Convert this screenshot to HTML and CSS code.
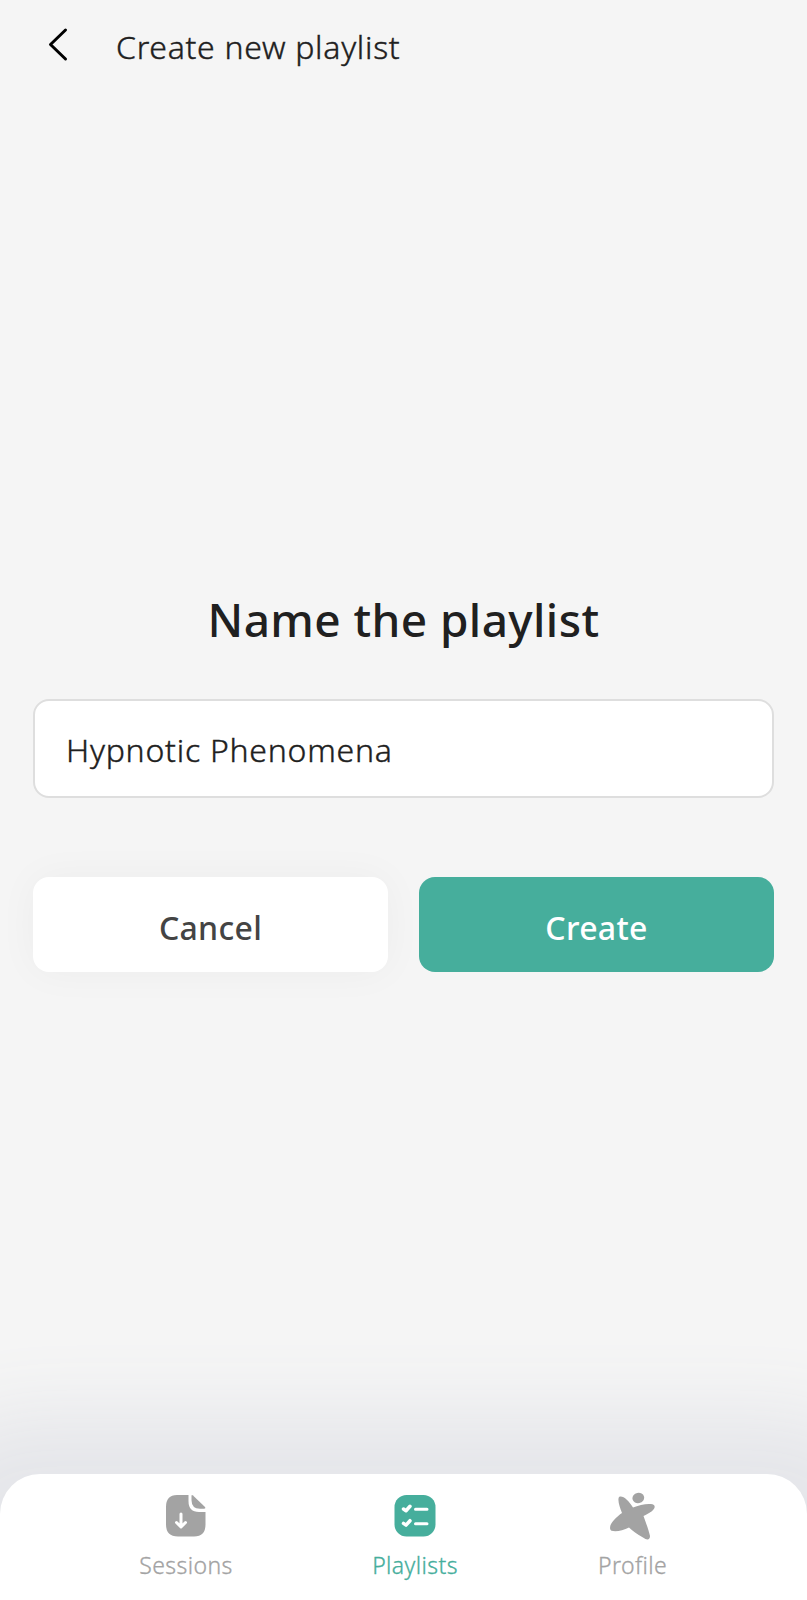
FILE: index.html
```html
<!DOCTYPE html>
<html lang="en">
<head>
    <meta charset="UTF-8">
    <title>Create new playlist</title>
    <link rel="stylesheet" href="styles.css">
</head>
<body>
    <header class="header">
        <button class="back" type="button">
            <svg width="24" height="36" viewBox="0 0 24 36"><path d="M19.500 4L4.500 18.500L19.500 33"/></svg>
        </button>
        <span class="header-title">Create new playlist</span>
    </header>

    <main class="content">
        <h1>Name the playlist</h1>
        <input class="name-input" type="text" value="Hypnotic Phenomena">
        <div class="actions">
            <button class="btn cancel" type="button">Cancel</button>
            <button class="btn create" type="button">Create</button>
        </div>
    </main>

    <nav class="tabs">
        <a class="tab">
            <svg width="48" height="48" viewBox="0 0 48 48">
                <path fill="currentColor" d="M15 3H26.500V9Q26.500 20 37 20H43.500V32.500Q43.500 44.500 32 44.500H16Q4 44.500 4 32.500V15Q4 3 15 3Z"/>
                <path fill="currentColor" d="M29.500 4Q29.500 2.500 31 3.500L43 15Q44 16.700 42 16.700H38Q29.500 16.700 29.500 8Z"/>
                <path class="line" d="M19 22V34M14.500 30.500L19 35L23.500 30.500"/>
            </svg>
            <span>Sessions</span>
        </a>
        <a class="tab active">
            <svg width="48" height="48" viewBox="0 0 48 48">
                <rect x="3.500" y="3" width="41" height="41.500" rx="12" fill="currentColor"/>
                <path class="line" d="M24.500 17.300H36M24.500 31.700H36"/>
                <path class="line check" d="M12.500 17L15 18.700L19 14.300M12.500 31.400L15 33.100L19 28.700"/>
            </svg>
            <span>Playlists</span>
        </a>
        <a class="tab">
            <svg width="48" height="48" viewBox="0 0 48 48">
                <ellipse cx="29.300" cy="6" rx="5.900" ry="5.100" fill="currentColor" transform="rotate(-12 29.300 6)"/>
                <path fill="currentColor" d="M11 4.500C15 4 20 9 24 15.500C30 13 39 11 43.500 12.300C47 13.500 46 17 42.500 19.500C39 22 36.500 23 34.500 24C37 31 40 39 41 44C41 48 38 48.500 34 45.500C28 42 23.500 39 20 35.500C14 38.500 7 40 2.500 38.700C-.5 36.500 1.500 31.500 5 28C8 25 10.500 22.500 13 21C11 16 9 10 9.500 6.500Q9.700 4.700 11 4.500Z"/>
            </svg>
            <span>Profile</span>
        </a>
    </nav>
</body>
</html>
```
FILE: styles.css
```css
* {
    box-sizing: border-box;
}
body {
    margin: 0;
    height: 1600px;
    display: flex;
    flex-direction: column;
    background: #f5f5f5;
    color: #202020;
    font-family: "Noto Sans", "Open Sans", sans-serif;
    overflow: hidden;
}
button, input {
    font-family: inherit;
}

.header {
    display: flex;
    align-items: center;
    height: 92px;
    padding-left: 46px;
}
.back {
    display: flex;
    width: 70px;
    padding: 0 0 4px;
    border: none;
    background: none;
}
.back path {
    fill: none;
    stroke: #000;
    stroke-width: 3;
    stroke-linecap: round;
    stroke-linejoin: round;
}
.header-title {
    font-size: 32px;
    font-weight: 300;
    letter-spacing: 0.7px;
    -webkit-text-stroke: 0.4px;
}

.content {
    flex: 1;
    padding: 496px 33px 0;
}
h1 {
    margin: 0 0 49px;
    font-size: 46px;
    line-height: 62px;
    font-weight: 500;
    letter-spacing: 0.4px;
    text-align: center;
}
.name-input {
    display: block;
    width: 100%;
    height: 99px;
    padding: 1px 31px 0;
    border: 2px solid #dedede;
    border-radius: 16px;
    background: #fff;
    color: #202020;
    font-size: 32px;
    font-weight: 300;
    letter-spacing: 0.75px;
    -webkit-text-stroke: 0.4px;
}
.actions {
    display: flex;
    gap: 31px;
    margin-top: 79px;
}
.btn {
    flex: 1;
    height: 95px;
    padding: 5px 0 0;
    border: none;
    border-radius: 16px;
    font-size: 32px;
    font-weight: 500;
    letter-spacing: 0.3px;
}
.cancel {
    background: #fff;
    color: #444;
    box-shadow: 0 0 40px rgba(0, 0, 20, 0.04);
}
.create {
    background: #46ae9c;
    color: #fff;
}

.tabs {
    display: grid;
    grid-template-columns: 230px 228px 207px;
    justify-content: center;
    height: 126px;
    padding: 18px 0 0;
    border-radius: 40px 40px 0 0;
    background: #fff;
    box-shadow: 0 30px 80px 90px #e5e6ea;
}
.tab {
    display: flex;
    flex-direction: column;
    align-items: center;
    color: #a3a3a3;
    font-size: 23px;
    line-height: 32px;
    font-weight: 300;
    letter-spacing: 0.4px;
    -webkit-text-stroke: 0.3px;
}
.tab span {
    margin-top: 9px;
}
.active {
    color: #46ae9c;
}
.line {
    fill: none;
    stroke: #fff;
    stroke-width: 3;
    stroke-linecap: round;
    stroke-linejoin: round;
}
.check {
    stroke-width: 3.500;
}
```
